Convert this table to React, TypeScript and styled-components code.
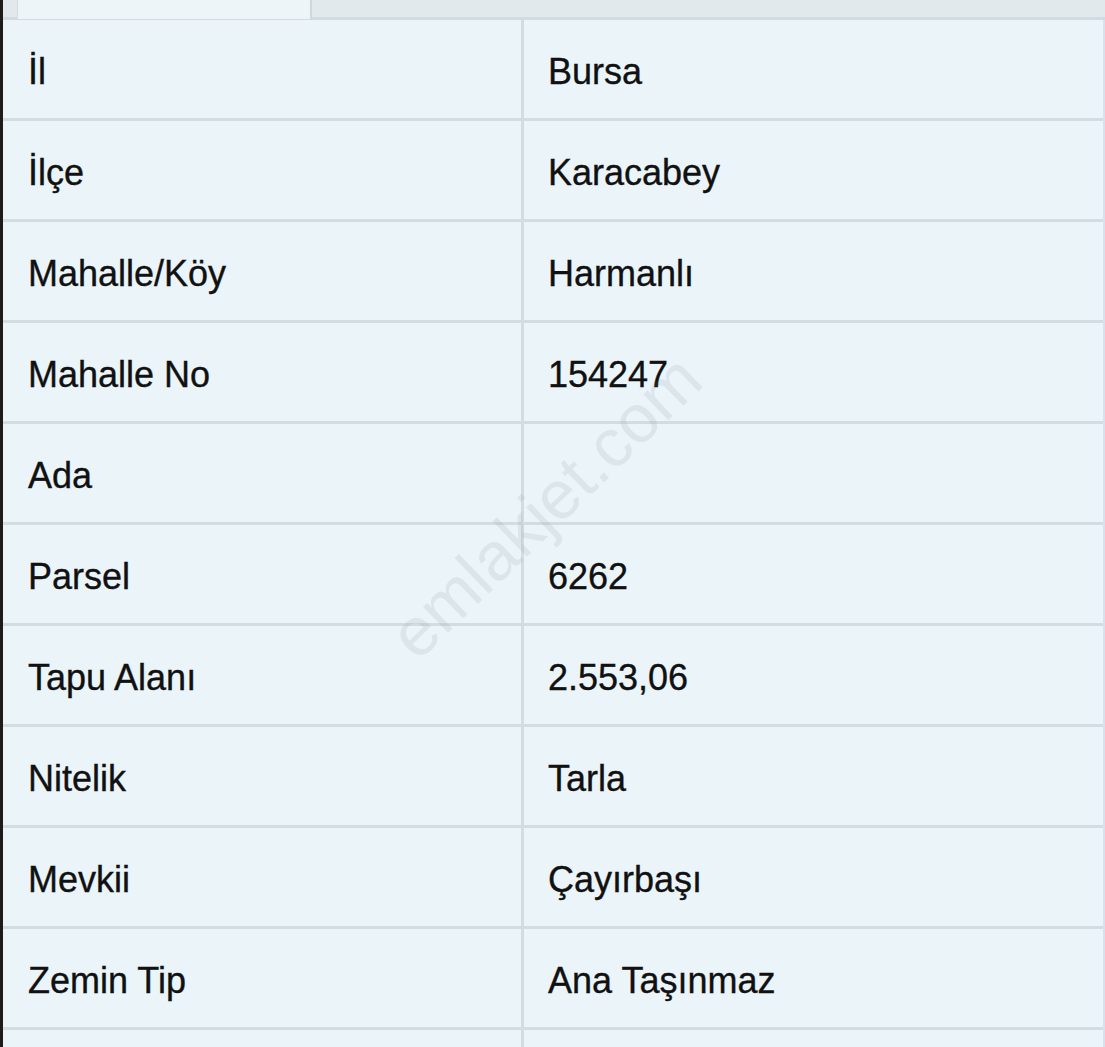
import React from "react";
import styled, { createGlobalStyle } from "styled-components";

const Global = createGlobalStyle`
  html, body { margin: 0; padding: 0; }
  body {
    background: #e9f2f6;
    font-family: "Liberation Sans", Arial, Helvetica, sans-serif;
    overflow: hidden;
  }
`;

const Page = styled.div`
  position: relative;
  width: 1105px;
  height: 1047px;
  overflow: hidden;
  border-left: 3px solid #1c1c1c;
  box-sizing: border-box;
  background: #e9f2f6;
`;

const TabStrip = styled.div`
  height: 17px;
  background: #e2e9ec;
  display: flex;
  align-items: stretch;
  padding-left: 14px;
  border-bottom: 3px solid #d2dbe0;
`;

const Tab = styled.div`
  width: 292px;
  background: #eef5f8;
  border-left: 1px solid #d6dde1;
  border-right: 2px solid #d0d8dc;
  margin-bottom: -2px;
`;

const Table = styled.div`
  display: grid;
  grid-template-columns: 518px 1fr;
  border-right: 2px solid #d9e2ec;
`;

const Cell = styled.div<{ $value?: boolean }>`
  height: 101px;
  display: flex;
  align-items: center;
  padding-left: ${(p) => (p.$value ? "24px" : "25px")};
  padding-top: 6px;
  box-sizing: border-box;
  background: #eaf4f9;
  border-bottom: 3px solid #d3dce1;
  border-left: ${(p) => (p.$value ? "3px solid #d3dce1" : "none")};
  font-size: 36px;
  color: #111;
  -webkit-text-stroke: 0.35px #111;
`;

const Watermark = styled.div`
  position: absolute;
  left: 542px;
  top: 506px;
  transform: translate(-50%, -50%) rotate(-44deg);
  font-family: "Liberation Sans", Arial, sans-serif;
  font-size: 68px;
  color: rgba(120, 130, 135, 0.12);
  white-space: nowrap;
  pointer-events: none;
`;

const rows: [string, string][] = [
  ["İl", "Bursa"],
  ["İlçe", "Karacabey"],
  ["Mahalle/Köy", "Harmanlı"],
  ["Mahalle No", "154247"],
  ["Ada", ""],
  ["Parsel", "6262"],
  ["Tapu Alanı", "2.553,06"],
  ["Nitelik", "Tarla"],
  ["Mevkii", "Çayırbaşı"],
  ["Zemin Tip", "Ana Taşınmaz"],
  ["", ""],
];

export default function App() {
  return (
    <Page>
      <Global />
      <TabStrip>
        <Tab />
      </TabStrip>
      <Table>
        {rows.map(([k, v], i) => (
          <React.Fragment key={i}>
            <Cell>{k}</Cell>
            <Cell $value>{v}</Cell>
          </React.Fragment>
        ))}
      </Table>
      <Watermark>emlakjet.com</Watermark>
    </Page>
  );
}
